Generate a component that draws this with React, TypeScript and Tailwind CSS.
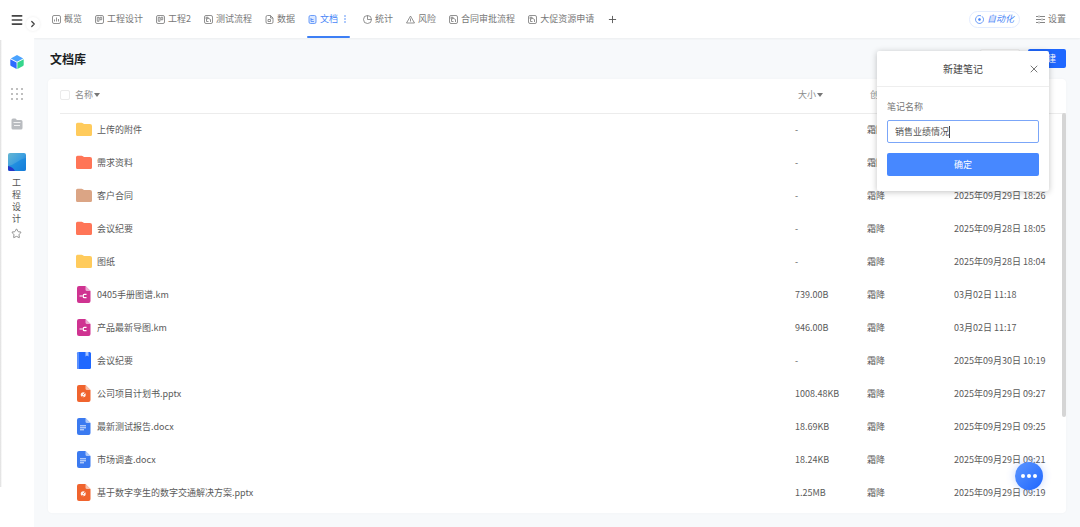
import { useState, type ReactNode } from "react";
import { Menu, ChevronRight, Plus, Star, X } from "lucide-react";

type FileKind = "yellow" | "red" | "tan" | "km" | "note" | "pptx" | "docx";

type FileRow = { kind: FileKind; name: string; size: string; owner: string; date: string };

const files: FileRow[] = [
  { kind: "yellow", name: "上传的附件", size: "-", owner: "霜降", date: "2025年09月29日 18:28" },
  { kind: "red", name: "需求资料", size: "-", owner: "霜降", date: "2025年09月29日 18:27" },
  { kind: "tan", name: "客户合同", size: "-", owner: "霜降", date: "2025年09月29日 18:26" },
  { kind: "red", name: "会议纪要", size: "-", owner: "霜降", date: "2025年09月28日 18:05" },
  { kind: "yellow", name: "图纸", size: "-", owner: "霜降", date: "2025年09月28日 18:04" },
  { kind: "km", name: "0405手册图谱.km", size: "739.00B", owner: "霜降", date: "03月02日 11:18" },
  { kind: "km", name: "产品最新导图.km", size: "946.00B", owner: "霜降", date: "03月02日 11:17" },
  { kind: "note", name: "会议纪要", size: "-", owner: "霜降", date: "2025年09月30日 10:19" },
  { kind: "pptx", name: "公司项目计划书.pptx", size: "1008.48KB", owner: "霜降", date: "2025年09月29日 09:27" },
  { kind: "docx", name: "最新测试报告.docx", size: "18.69KB", owner: "霜降", date: "2025年09月29日 09:25" },
  { kind: "docx", name: "市场调查.docx", size: "18.24KB", owner: "霜降", date: "2025年09月29日 09:21" },
  { kind: "pptx", name: "基于数字孪生的数字交通解决方案.pptx", size: "1.25MB", owner: "霜降", date: "2025年09月29日 09:19" },
];

type TabIcon = "overview" | "board" | "flow" | "data" | "doc" | "stats" | "risk";

const tabs: { label: string; icon: TabIcon }[] = [
  { label: "概览", icon: "overview" },
  { label: "工程设计", icon: "board" },
  { label: "工程2", icon: "board" },
  { label: "测试流程", icon: "flow" },
  { label: "数据", icon: "data" },
  { label: "文档", icon: "doc" },
  { label: "统计", icon: "stats" },
  { label: "风险", icon: "risk" },
  { label: "合同审批流程", icon: "flow" },
  { label: "大促资源申请", icon: "flow" },
];

const tabPaths: Record<TabIcon, ReactNode> = {
  overview: (
    <>
      <rect x="1" y="1" width="16" height="16" rx="3" />
      <path d="M5 13V9M9 13V5M13 13V8" />
    </>
  ),
  board: (
    <>
      <rect x="1" y="1" width="16" height="16" rx="3" />
      <path d="M4.500 4.500h3.500v8H4.500zM10 4.500h3.500v5H10z" />
    </>
  ),
  flow: (
    <>
      <rect x="1" y="1" width="16" height="16" rx="3" />
      <path d="M4 4.500h4v3H4zM8 6l5 3v5M5 8v5h4" />
    </>
  ),
  data: (
    <>
      <path d="M11 1H5a3 3 0 0 0-3 3v10a3 3 0 0 0 3 3h8a3 3 0 0 0 3-3V6z" />
      <path d="M11 1v5h5M6 13V9h5v4z" />
    </>
  ),
  doc: (
    <>
      <rect x="2" y="1" width="14" height="16" rx="3" fill="#dbe8ff" />
      <path d="M6 6v7h6M6 9h5" />
    </>
  ),
  stats: (
    <>
      <circle cx="9" cy="9" r="8" />
      <path d="M9 1v8h8" />
    </>
  ),
  risk: (
    <>
      <path d="M9 2 1 16h16z" strokeLinejoin="round" />
      <path d="M9 7v5M9 13v1" />
    </>
  ),
};

function TabGlyph({ icon }: { icon: TabIcon }) {
  return (
    <svg viewBox="0 0 18 18" className="size-[9px] shrink-0" fill="none" stroke="currentColor" strokeWidth="1.6">
      {tabPaths[icon]}
    </svg>
  );
}

const folderColors: Record<string, string> = { yellow: "#ffcb5c", red: "#ff7557", tan: "#dba585" };
const fileColors: Record<string, string> = { km: "#cf3391", pptx: "#f0642e", docx: "#3b7af0" };

function FileIcon({ kind }: { kind: FileKind }) {
  if (kind in folderColors) {
    return (
      <svg viewBox="0 0 16 17" className="h-[17px] w-4 shrink-0" fill={folderColors[kind]}>
        <path d="M0 3.200Q0 1.700 1.500 1.700h4.200q.7 0 1.200.5L8 3h6q2 0 2 2v8.500q0 1.500-1.500 1.500h-13Q0 15 0 13.500z" />
      </svg>
    );
  }
  if (kind === "note") {
    return (
      <svg viewBox="0 0 16 17" className="h-[17px] w-4 shrink-0">
        <rect x="1" width="14" height="17" rx="1.500" fill="#1f68ff" />
        <path d="M1 1.500Q1 0 2.500 0H3v17h-.5Q1 17 1 15.500z" fill="#5a90ff" />
        <path d="M9.500 0h3v4.500L11 3.400 9.500 4.500z" fill="#a9c6ff" />
      </svg>
    );
  }
  return (
    <svg viewBox="0 0 16 17" className="h-[17px] w-4 shrink-0">
      <path d="M1 2Q1 0 3 0h6.500L14.500 5v10q0 2-2 2H3q-2 0-2-2z" fill={fileColors[kind]} />
      <path d="M9.500 0 14.500 5h-3.500q-1.500 0-1.500-1.500z" fill="#fff" opacity=".6" />
      {kind === "km" && (
        <path d="M3.500 10h3M10.500 8.300H8.300q-1 0-1 1v1.400q0 1 1 1h2.200" fill="none" stroke="#fff" strokeWidth="1.200" />
      )}
      {kind === "docx" && <path d="M4 7.800h6M4 9.800h6M4 11.800h4" stroke="#fff" strokeWidth="1" opacity=".85" />}
      {kind === "pptx" && (
        <>
          <circle cx="7.200" cy="9.800" r="2.500" fill="#fff" opacity=".9" />
          <path d="M7 10 9 8M5.500 11.500h2" stroke="#f0642e" strokeWidth=".8" />
        </>
      )}
    </svg>
  );
}

function Caret() {
  return (
    <svg viewBox="0 0 6 4" className="h-1 w-1.5" fill="#777">
      <path d="M0 0h6L3 4z" />
    </svg>
  );
}

function Sidebar() {
  return (
    <aside className="relative z-10 flex w-[34px] shrink-0 flex-col items-center bg-white pr-px">
      <div className="absolute top-10 bottom-10 left-0 w-0.5 bg-gradient-to-r from-[#dcdcdc] to-white" />
      <button aria-label="菜单" className="flex h-10 items-center text-[#444]">
        <Menu className="size-[14px]" strokeWidth={2.8} />
      </button>
      <button
        aria-label="展开"
        className="absolute top-[17px] -right-1.5 flex size-[14px] items-center justify-center rounded-full bg-white text-[#444] shadow-[0_0_3px_rgba(0,0,0,0.08)]"
      >
        <ChevronRight className="size-[10px]" strokeWidth={3} />
      </button>
      <a href="#home" aria-label="首页" className="mt-[15px]">
        <svg viewBox="0 0 14 14" className="size-[14px]">
          <path d="M7 0 13.200 3.400 7 6.800.8 3.400z" fill="#4aa3ff" />
          <path d="M.3 4.200 6.600 7.600V14L1 11Q.3 10.600.3 9.800z" fill="#2f6bff" />
          <path d="M13.700 4.200 7.400 7.600V14L13 11q.7-.4.7-1.200z" fill="#35d68c" />
        </svg>
      </a>
      <button aria-label="应用" className="mt-[19px]">
        <svg viewBox="0 0 12 12" className="size-3" fill="#aaa">
          {[1, 6, 11].map((y) => [1, 6, 11].map((x) => <circle key={`${x}-${y}`} cx={x} cy={y} r="1" />))}
        </svg>
      </button>
      <button aria-label="文件" className="mt-[18px]">
        <svg viewBox="0 0 12 12" className="size-3" fill="#b9bcc0">
          <path d="M.5 2Q.5.500 2 .5h2.500L6 2h4q1.500 0 1.500 1.500V10q0 1.500-1.500 1.500H2Q.5 11.500.5 10z" />
          <path d="M2.500 4.500h7M3 7.500h6" stroke="#fff" strokeWidth=".8" />
        </svg>
      </button>
      <div className="mt-[23px] size-[18px] overflow-hidden rounded-xs bg-linear-to-br from-[#65b6d2] via-[#3c9fe0] to-[#1262c8]">
        <svg viewBox="0 0 18 18" className="size-full">
          <path d="M0 13q5-1 9-4t9-4v13H0z" fill="#1687e0" opacity=".7" />
          <path d="M0 13q5 1 7 5H0z" fill="#2637c8" />
        </svg>
      </div>
      <p className="mt-1.5 w-[9px] leading-3 break-all text-[#555]">工程设计</p>
      <button aria-label="收藏" className="mt-[3px] text-[#888]">
        <Star className="size-[11px]" strokeWidth={2} />
      </button>
    </aside>
  );
}

function TopBar() {
  return (
    <header className="flex h-[38px] shrink-0 items-center justify-between bg-white pr-[14px] pl-[18px] text-[#777] shadow-[0_1px_2px_rgba(0,0,0,0.05)]">
      <nav className="flex h-full items-center gap-[13px]">
        {tabs.map((tab) =>
          tab.label === "文档" ? (
            <a
              key={tab.label}
              href="#doc"
              className="relative flex h-full items-center gap-[3px] pr-1 whitespace-nowrap text-[#4a86f7]"
            >
              <TabGlyph icon={tab.icon} />
              {tab.label}
              <svg viewBox="0 0 2 8" className="ml-[3px] h-2 w-0.5" fill="currentColor">
                <circle cx="1" cy="1" r=".8" />
                <circle cx="1" cy="4" r=".8" />
                <circle cx="1" cy="7" r=".8" />
              </svg>
              <span className="absolute right-0 bottom-0 -left-px h-0.5 rounded-full bg-[#3d7ff5]" />
            </a>
          ) : (
            <a key={tab.label} href="#tab" className="flex items-center gap-[3px] whitespace-nowrap">
              <TabGlyph icon={tab.icon} />
              {tab.label}
            </a>
          ),
        )}
        <button aria-label="添加" className="text-[#555]">
          <Plus className="size-[11px]" strokeWidth={2} />
        </button>
      </nav>
      <div className="flex items-center gap-4">
        <button className="flex h-[17px] items-center gap-[3px] rounded-full border border-[#e3ecff] px-[5px] text-[#4a86f7] italic">
          <svg viewBox="0 0 18 18" className="size-[9px]" fill="none" stroke="currentColor" strokeWidth="1.600">
            <path d="M12 1.500A8 8 0 1 0 16.500 6" />
            <circle cx="9" cy="9" r="2" fill="currentColor" />
            <path d="M14 2.500 16.500 6" />
          </svg>
          自动化
        </button>
        <button className="flex items-center gap-[3px]">
          <svg viewBox="0 0 18 18" className="size-[9px]" fill="none" stroke="currentColor" strokeWidth="1.800">
            <path d="M0 3h4M8 3h10M0 9h10M14 9h4M0 15h4M8 15h10M6 1v4M12 7v4M6 13v4" />
          </svg>
          设置
        </button>
      </div>
    </header>
  );
}

function FileTable() {
  return (
    <table className="w-full table-fixed text-left text-[#5a5a5a]">
      <colgroup>
        <col />
        <col className="w-[72px]" />
        <col className="w-[87px]" />
        <col className="w-[112px]" />
      </colgroup>
      <thead>
        <tr className="h-[34px] border-b border-[#ececec] text-[#8c8c8c]">
          <th className="pb-px font-normal">
            <div className="flex items-center gap-[5px]">
              <input
                type="checkbox"
                aria-label="全选"
                className="size-[10px] appearance-none rounded-xs border border-[#ebebeb] bg-white"
              />
              <span className="flex items-center gap-px">
                名称
                <Caret />
              </span>
            </div>
          </th>
          <th className="pb-px pl-[3px] font-normal">
            <span className="flex items-center gap-px">
              大小
              <Caret />
            </span>
          </th>
          <th className="pb-px pl-[3px] font-normal">创建人</th>
          <th className="pb-px pl-[3px] font-normal">更新时间</th>
        </tr>
      </thead>
      <tbody>
        {files.map((file) => (
          <tr key={file.name + file.date} className="h-[33px] whitespace-nowrap">
            <td>
              <div className="flex items-center gap-[5px] pl-4">
                <FileIcon kind={file.kind} />
                {file.name}
              </div>
            </td>
            <td>{file.size}</td>
            <td>{file.owner}</td>
            <td>{file.date}</td>
          </tr>
        ))}
      </tbody>
    </table>
  );
}

function NewNoteDialog() {
  const [name, setName] = useState("销售业绩情况");

  return (
    <div
      role="dialog"
      aria-labelledby="note-title"
      className="absolute top-[51px] right-[31px] z-20 w-[172px] rounded-xs bg-white shadow-[0_1px_6px_rgba(0,0,0,0.24)]"
    >
      <div className="relative flex h-9 items-center justify-center border-b border-[#eee]">
        <h2 id="note-title" className="text-[10px] text-[#444]">
          新建笔记
        </h2>
        <button aria-label="关闭" className="absolute right-[9px] text-[#555]">
          <X className="size-3" strokeWidth={1.6} />
        </button>
      </div>
      <form className="px-[10px] pt-[14px] pb-[15px]" onSubmit={(e) => e.preventDefault()}>
        <label htmlFor="note-name" className="block leading-3 text-[#777]">
          笔记名称
        </label>
        <div className="relative mt-[7px] flex items-center">
          <input
            id="note-name"
            value={name}
            onChange={(e) => setName(e.target.value)}
            className="peer block h-[23px] w-full rounded-xs border border-[#7ba6f8] px-[7px] text-[#555] outline-none"
          />
          {/* resting caret, replaced by the native one on focus */}
          <span className="pointer-events-none absolute left-[62px] h-3 w-px bg-[#444] peer-focus:hidden" />
        </div>
        <button className="mt-[10px] block h-[23px] w-full rounded-xs bg-[#4788ff] text-white">确定</button>
      </form>
    </div>
  );
}

export default function App() {
  return (
    <div
      lang="zh-CN"
      className="relative flex h-screen overflow-hidden bg-[#f7f9fb] font-['Noto_Sans_CJK_SC',sans-serif] text-[9px] leading-4"
    >
      <Sidebar />
      <div className="flex min-w-0 flex-1 flex-col">
        <TopBar />
        <main className="flex min-h-0 flex-1 flex-col pr-[14px] pb-[14px] pl-[14px]">
          <div className="flex h-[41px] shrink-0 items-center justify-between pl-[2px]">
            <h1 className="text-xs font-bold text-[#1c1f24]">文档库</h1>
            <div className="flex gap-2">
              <button className="h-[19px] rounded-xs border border-[#eee] bg-white px-[10px] text-[#666]">上传</button>
              <button className="h-[19px] rounded-xs bg-[#1f68ff] px-[10px] text-white">新建</button>
            </div>
          </div>
          <section className="relative min-h-0 flex-1 overflow-hidden rounded-sm bg-white pl-3 shadow-[0_0_3px_rgba(0,0,0,0.03)]">
            <FileTable />
            <div className="absolute top-[34px] right-0 h-[304px] w-1 rounded-full bg-[#d5d5d5]" />
          </section>
        </main>
      </div>
      <NewNoteDialog />
      <button
        aria-label="更多"
        className="absolute right-[37px] bottom-[37px] z-20 flex size-7 items-center justify-center gap-0.5 rounded-full bg-linear-to-br from-[#5b95ff] to-[#1c64ff] shadow-[0_0_8px_rgba(60,120,255,0.3)]"
      >
        <span className="size-1 rounded-full bg-white" />
        <span className="size-1 rounded-full bg-white" />
        <span className="size-1 rounded-full bg-white" />
      </button>
    </div>
  );
}
